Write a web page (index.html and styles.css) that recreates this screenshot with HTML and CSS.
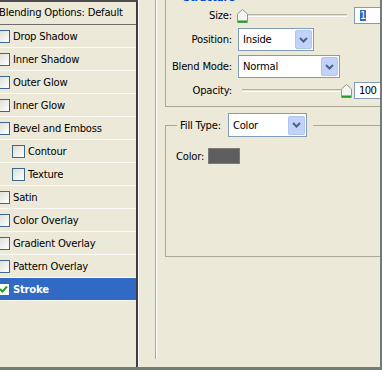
FILE: index.html
```html
<!DOCTYPE html>
<html lang="en">
<head>
    <meta charset="UTF-8">
    <title>Layer Style - Stroke</title>
    <link rel="stylesheet" href="styles.css">
</head>
<body>
    <div class="window">
        <div class="styles">
            <div class="styles-head">Blending Options: Default</div>
            <ul class="style-list">
                <li class="style-item"><span class="check"></span>Drop Shadow</li>
                <li class="style-item"><span class="check"></span>Inner Shadow</li>
                <li class="style-item"><span class="check"></span>Outer Glow</li>
                <li class="style-item"><span class="check"></span>Inner Glow</li>
                <li class="style-item"><span class="check"></span>Bevel and Emboss</li>
                <li class="style-item sub"><span class="check"></span>Contour</li>
                <li class="style-item sub"><span class="check"></span>Texture</li>
                <li class="style-item"><span class="check"></span>Satin</li>
                <li class="style-item"><span class="check"></span>Color Overlay</li>
                <li class="style-item"><span class="check"></span>Gradient Overlay</li>
                <li class="style-item"><span class="check"></span>Pattern Overlay</li>
                <li class="style-item selected">
                    <span class="check checked">
                        <svg width="11" height="11" viewBox="0 0 11 11"><polyline points="2,5 4.5,7.5 9,2.5" fill="none" stroke="#21a121" stroke-width="2"/></svg>
                    </span>Stroke
                </li>
            </ul>
        </div>

        <div class="options">
            <div class="page">
                <fieldset class="group structure">
                    <legend>Structure</legend>
                    <div class="form-grid">
                        <label>Size:</label>
                        <div class="slider-row">
                            <div class="slider at-min">
                                <div class="track"></div>
                                <svg class="thumb" width="11" height="14" viewBox="0 0 11 14"><path d="M0.5 13.5V5L5.5 0.5L10.5 5V13.5Z" fill="#f4f4f0" stroke="#8e9a8e"/><path d="M1 12.5H10" stroke="#21a121" stroke-width="2"/></svg>
                            </div>
                            <div class="num"><span class="sel">1</span></div>
                        </div>

                        <label>Position:</label>
                        <div class="select pos-select">Inside
                            <span class="arrow"><svg width="9" height="6" viewBox="0 0 9 6"><polyline points="1,1 4.5,4.5 8,1" fill="none" stroke="#4d6185" stroke-width="2"/></svg></span>
                        </div>

                        <label>Blend Mode:</label>
                        <div class="select blend-select">Normal
                            <span class="arrow"><svg width="9" height="6" viewBox="0 0 9 6"><polyline points="1,1 4.5,4.5 8,1" fill="none" stroke="#4d6185" stroke-width="2"/></svg></span>
                        </div>

                        <label>Opacity:</label>
                        <div class="slider-row">
                            <div class="slider at-max">
                                <div class="track"></div>
                                <svg class="thumb" width="11" height="14" viewBox="0 0 11 14"><path d="M0.5 13.5V5L5.5 0.5L10.5 5V13.5Z" fill="#f4f4f0" stroke="#8e9a8e"/><path d="M1 12.5H10" stroke="#21a121" stroke-width="2"/></svg>
                            </div>
                            <div class="num tight">100</div>
                        </div>
                    </div>
                </fieldset>

                <fieldset class="group fill">
                    <legend>
                        <div class="legend-inner">
                            <span>Fill Type:</span>
                            <div class="select fill-select">Color
                                <span class="arrow"><svg width="9" height="6" viewBox="0 0 9 6"><polyline points="1,1 4.5,4.5 8,1" fill="none" stroke="#4d6185" stroke-width="2"/></svg></span>
                            </div>
                        </div>
                    </legend>
                    <div class="fill-body">
                        <span>Color:</span>
                        <span class="swatch"></span>
                    </div>
                </fieldset>
            </div>
        </div>
    </div>
</body>
</html>
```

FILE: styles.css
```css
* {
    box-sizing: border-box;
}
body {
    margin: 0;
    width: 382px;
    height: 370px;
    overflow: hidden;
    background-color: #ece9d8;
    font-family: "DejaVu Sans", sans-serif;
    font-size: 10px;
    letter-spacing: -0.2px;
    color: #000;
}
.window {
    display: flex;
    height: 370px;
    border-right: 2px solid #6f7d75;
    border-bottom: 3px solid #6f7d75;
    overflow: hidden;
}

/* left list of styles */
.styles {
    width: 138px;
    flex: none;
    border-top: 2px solid #4b4b4b;
    border-right: 2px solid #3e3e3e;
}
.styles-head {
    height: 23px;
    line-height: 22px;
    margin-left: -1px;
    border-bottom: 1px solid #6e6e6e;
    white-space: nowrap;
}
.style-list {
    list-style: none;
    margin: 0;
    padding: 0;
}
.style-item {
    display: flex;
    align-items: center;
    gap: 3px;
    height: 23px;
    margin-left: -3px;
    border-bottom: 1px solid #fbfaf4;
    white-space: nowrap;
}
.style-item.sub {
    padding-left: 15px;
}
.style-item.selected {
    background-color: #316ac5;
    color: #fff;
    font-weight: bold;
}
.check {
    flex: none;
    width: 13px;
    height: 13px;
    border: 1px solid #3d6690;
    background: linear-gradient(135deg, #dcdcd6, #fff);
}
.check.checked {
    background: #fff;
}
.check svg {
    display: block;
}

/* right options page */
.options {
    flex: 1;
    min-width: 0;
    border-left: 1px solid #fff;
    padding-left: 16px;
}
.page {
    height: 100%;
    border-left: 1px solid #aca899;
    box-shadow: inset 1px 0 0 #fff;
    padding-left: 9px;
}
.group {
    margin: 0;
    padding: 0;
    width: 300px;
    border: 1px solid #aca899;
}
.structure {
    margin-top: -8px;
    padding: 3px 0 7px;
}
.structure legend {
    margin-left: 15px;
    padding: 0 2px;
    line-height: 12px;
    color: #0046d5;
    font-weight: bold;
}
.form-grid {
    display: grid;
    grid-template-columns: 66px auto;
    grid-template-rows: 17px 23px 23px 17px;
    column-gap: 6px;
    row-gap: 4px;
    align-items: center;
}
.form-grid label {
    text-align: right;
    white-space: nowrap;
}
.slider-row {
    display: flex;
    align-items: center;
    gap: 2px;
    margin-left: -1px;
}
.slider {
    position: relative;
    width: 115px;
    height: 17px;
}
.track {
    position: absolute;
    left: 5px;
    right: 5px;
    top: 7px;
    height: 3px;
    border-top: 1px solid #b3b1a5;
    border-bottom: 1px solid #fff;
    background-color: #e4e2d8;
}
.thumb {
    position: absolute;
    top: 2px;
}
.at-min .thumb {
    left: 0;
}
.at-max .thumb {
    right: 0;
}
.num {
    width: 40px;
    height: 17px;
    border: 1px solid #7f9db9;
    background-color: #fff;
    padding: 2px 0 0 5px;
    line-height: 12px;
}
.num.tight {
    padding-left: 4px;
    letter-spacing: -0.6px;
}
.num .sel {
    background-color: #316ac5;
    color: #fff;
}
.select {
    display: flex;
    align-items: center;
    height: 23px;
    border: 1px solid #7f9db9;
    background-color: #fff;
    padding-left: 4px;
    white-space: nowrap;
}
.pos-select {
    width: 76px;
}
.blend-select {
    width: 102px;
}
.arrow {
    display: flex;
    align-items: center;
    justify-content: center;
    width: 17px;
    height: 19px;
    margin-left: auto;
    margin-right: 1px;
    background-color: #c1d3fb;
    border: 1px solid #b2c5f0;
    border-radius: 2px;
}

/* fill type group */
.fill {
    margin-top: 6px;
}
.fill legend {
    margin-left: 11px;
    padding: 0 6px 0 3px;
}
.legend-inner {
    display: flex;
    align-items: center;
    gap: 7px;
}
.fill-select {
    width: 79px;
    height: 24px;
}
.fill-body {
    display: flex;
    align-items: center;
    gap: 4px;
    padding: 11px 0 92px 10px;
}
.swatch {
    width: 32px;
    height: 16px;
    border: 1px solid #7a7a7a;
    background-color: #5e5e5e;
}
```
